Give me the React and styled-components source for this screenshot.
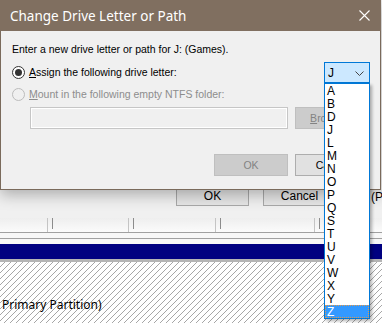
import React from "react";
import styled, { createGlobalStyle } from "styled-components";

const GlobalStyle = createGlobalStyle`
  html, body {
    margin: 0;
    padding: 0;
    background: #f0f0f0;
  }
  body {
    width: 382px;
    height: 323px;
    overflow: hidden;
  }
`;

const DRIVES = ["A", "B", "D", "J", "L", "M", "N", "O", "P", "Q", "S", "T", "U", "V", "W", "X", "Y", "Z"];
const COLUMNS = [47, 81, 87, 99, 68];

function App() {
    return (
        <>
            <GlobalStyle />
            <Screen>
                <Backdrop>
                    <BackTop />
                    <BackButtons>
                        <BackButton>OK</BackButton>
                        <BackButton>Cancel</BackButton>
                        <BackLabel>(Pr</BackLabel>
                    </BackButtons>
                    <ColumnRow>
                        {COLUMNS.map((w, i) => (
                            <Column key={i} $w={w} $first={i === 0}>
                                {i > 0 && <Tick />}
                            </Column>
                        ))}
                    </ColumnRow>
                    <Strip $h={5} $bg="#f7f7f7" />
                    <Strip $h={1} $bg="#a0a0a0" />
                    <Strip $h={5} $bg="#f7f7f7" />
                    <Strip $h={15} $bg="#000080" />
                    <Strip $h={3} $bg="#b4b4b4" />
                    <Hatch>
                        <HatchLabel>Primary Partition)</HatchLabel>
                    </Hatch>
                </Backdrop>

                <Dialog>
                    <TitleBar>
                        <Title>Change Drive Letter or Path</Title>
                        <svg width="11" height="11" viewBox="0 0 11 11">
                            <path d="M0.5 0.5 L10.5 10.5 M10.5 0.5 L0.5 10.5" stroke="#fff" strokeWidth="1.1" />
                        </svg>
                    </TitleBar>
                    <Body>
                        <Prompt>Enter a new drive letter or path for J: (Games).</Prompt>
                        <OptionRow $h={21}>
                            <Option>
                                <Radio $checked />
                                <OptionLabel>
                                    <u>A</u>ssign the following drive letter:
                                </OptionLabel>
                            </Option>
                            <Combo>
                                <span>J</span>
                                <svg width="9" height="5" viewBox="0 0 9 5">
                                    <path d="M0.5 0.5 L4.5 4.5 L8.5 0.5" stroke="#444" fill="none" strokeWidth="1" />
                                </svg>
                                <DropList>
                                    {DRIVES.map((d) => (
                                        <DropItem key={d} $selected={d === "Z"}>
                                            {d}
                                        </DropItem>
                                    ))}
                                </DropList>
                            </Combo>
                        </OptionRow>
                        <OptionRow $h={13} $top={5}>
                            <Option>
                                <Radio $disabled />
                                <OptionLabel $disabled>
                                    <u>M</u>ount in the following empty NTFS folder:
                                </OptionLabel>
                            </Option>
                        </OptionRow>
                        <FolderRow>
                            <FolderBox />
                            <Button $disabled>
                                <u>B</u>rowse...
                            </Button>
                        </FolderRow>
                        <ButtonRow>
                            <Button $disabled>OK</Button>
                            <Button>Cancel</Button>
                        </ButtonRow>
                    </Body>
                </Dialog>
            </Screen>
        </>
    );
}

export default App;

const Screen = styled.div`
    position: relative;
    width: 382px;
    height: 323px;
    overflow: hidden;
    font-family: "Liberation Sans", Arial, sans-serif;
    font-size: 10.5px;
    color: #000;
`;

const Backdrop = styled.div`
    display: flex;
    flex-direction: column;
    width: 100%;
    height: 100%;
    background: #f0f0f0;
`;

const BackTop = styled.div`
    flex: none;
    height: 183px;
`;

const BackButtons = styled.div`
    flex: none;
    display: flex;
    align-items: center;
    height: 23px;
    padding-left: 176px;
    gap: 14px;
    white-space: nowrap;
`;

const BackButton = styled.div`
    flex: none;
    width: 73px;
    height: 23px;
    box-sizing: border-box;
    border: 1px solid #a9a9a9;
    background: #e6e6e6;
    display: flex;
    align-items: center;
    justify-content: center;
    font-size: 12px;
    padding-top: 3px;
`;

const BackLabel = styled.span`
    margin-left: 21px;
    font-size: 12px;
    padding-top: 4px;
`;

const ColumnRow = styled.div`
    flex: none;
    display: flex;
    height: 14px;
    margin-top: 12px;
    border-bottom: 1px solid #a0a0a0;
    background: linear-gradient(#eeeeee, #fbfbfb);
`;

const Column = styled.div`
    flex: none;
    width: ${(p) => p.$w}px;
    box-sizing: border-box;
    border-left: ${(p) => (p.$first ? "none" : "1px solid #c4c4c4")};
    display: flex;
`;

const Tick = styled.div`
    width: 1px;
    height: 11px;
    margin-left: 4px;
    background: #8c8c8c;
`;

const Strip = styled.div`
    flex: none;
    height: ${(p) => p.$h}px;
    background: ${(p) => p.$bg};
`;

const Hatch = styled.div`
    flex: 1;
    display: flex;
    align-items: flex-end;
    padding: 0 0 10px 2px;
    background-color: #fff;
    background-image: repeating-linear-gradient(
        135deg,
        transparent 0 3.24px,
        #a6a6a6 3.24px 4.24px
    );
`;

const HatchLabel = styled.span`
    font-family: "Noto Sans", "Liberation Sans", sans-serif;
    font-size: 12px;
    line-height: 16px;
`;

const Dialog = styled.div`
    position: absolute;
    left: 0;
    top: 0;
    width: 381px;
    height: 190px;
    box-sizing: border-box;
    border: 1px solid #7a6a5b;
    border-top: none;
    background: #f0f0f0;
    box-shadow: 0 5px 14px rgba(0, 0, 0, 0.28);
    display: flex;
    flex-direction: column;
`;

const TitleBar = styled.div`
    flex: none;
    height: 31px;
    margin: 0 -1px;
    padding: 0 11px 0 10px;
    display: flex;
    align-items: center;
    justify-content: space-between;
    background: #806f60;
    color: #fff;
`;

const Title = styled.span`
    font-family: "Noto Sans", "Liberation Sans", sans-serif;
    font-size: 13.5px;
`;

const Body = styled.div`
    display: flex;
    flex-direction: column;
    padding: 12px 11px 0 11px;
`;

const Prompt = styled.div`
    line-height: 13px;
    white-space: nowrap;
`;

const OptionRow = styled.div`
    display: flex;
    align-items: center;
    justify-content: space-between;
    height: ${(p) => p.$h}px;
    margin-top: ${(p) => p.$top ?? 6}px;
`;

const Option = styled.div`
    display: flex;
    align-items: center;
    gap: 4px;
`;

const Radio = styled.span`
    flex: none;
    width: 13px;
    height: 13px;
    box-sizing: border-box;
    border-radius: 50%;
    border: 1px solid ${(p) => (p.$disabled ? "#bcbcbc" : "#333")};
    background: ${(p) => (p.$disabled ? "#f0f0f0" : "#fff")};
    display: flex;
    align-items: center;
    justify-content: center;

    &::after {
        content: "";
        display: ${(p) => (p.$checked ? "block" : "none")};
        width: 7px;
        height: 7px;
        border-radius: 50%;
        background: #333;
    }
`;

const OptionLabel = styled.span`
    white-space: nowrap;
    line-height: 13px;
    color: ${(p) => (p.$disabled ? "#8d8d8d" : "#000")};
`;

const Combo = styled.div`
    position: relative;
    flex: none;
    width: 46px;
    height: 21px;
    margin-right: -1px;
    box-sizing: border-box;
    border: 1px solid #0078d7;
    background: #cce8ff;
    display: flex;
    align-items: center;
    justify-content: space-between;
    padding: 1px 5px 0 3px;
    font-size: 12px;
`;

const DropList = styled.div`
    position: absolute;
    left: -1px;
    top: 20px;
    width: 46px;
    box-sizing: border-box;
    border: 1px solid #0078d7;
    background: #fff;
    box-shadow: 2px 2px 3px rgba(0, 0, 0, 0.3);
    display: flex;
    flex-direction: column;
    z-index: 2;
`;

const DropItem = styled.div`
    height: 13px;
    line-height: 14px;
    padding-left: 2px;
    font-size: 12px;
    box-sizing: border-box;
    background: ${(p) => (p.$selected ? "#3399ff" : "transparent")};
    color: ${(p) => (p.$selected ? "#fff" : "#000")};
    outline: ${(p) => (p.$selected ? "1px dotted #e39a4b" : "none")};
    outline-offset: -1px;
`;

const FolderRow = styled.div`
    display: flex;
    align-items: center;
    gap: 7px;
    margin-top: 6px;
    padding-left: 18px;
`;

const FolderBox = styled.div`
    width: 258px;
    height: 22px;
    box-sizing: border-box;
    border: 1px solid #c6c6c6;
    box-shadow: inset 0 0 0 1px #fff;
    background: #f0f0f0;
`;

const Button = styled.div`
    flex: none;
    width: 74px;
    height: 22px;
    box-sizing: border-box;
    border: 1px solid ${(p) => (p.$disabled ? "#bfbfbf" : "#adadad")};
    background: ${(p) => (p.$disabled ? "#cccccc" : "#e1e1e1")};
    color: ${(p) => (p.$disabled ? "#838383" : "#000")};
    display: flex;
    align-items: center;
    justify-content: center;
    white-space: nowrap;
`;

const ButtonRow = styled.div`
    display: flex;
    justify-content: flex-end;
    gap: 7px;
    margin-top: 25px;
`;
